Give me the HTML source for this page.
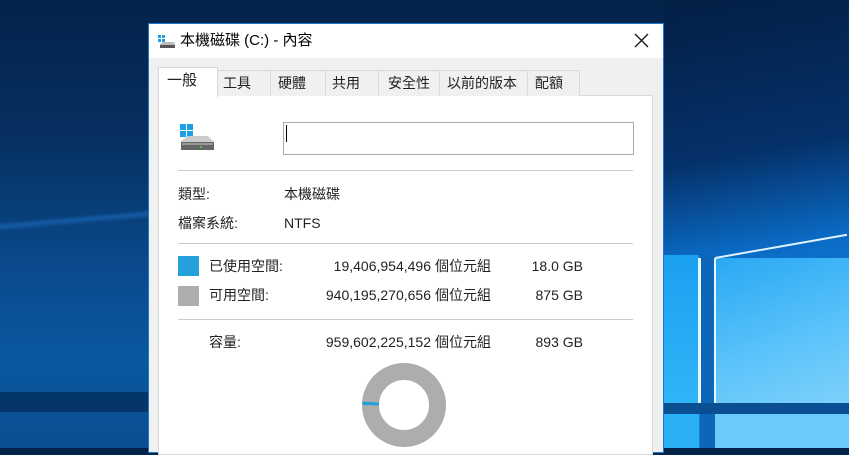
<!DOCTYPE html>
<html><head><meta charset="utf-8"><style>
*{margin:0;padding:0;box-sizing:border-box}
body{width:849px;height:448px;overflow:hidden;position:relative;font-family:"Liberation Sans","Noto Sans CJK TC",sans-serif;font-size:14px;color:#222;
background:linear-gradient(180deg,#04234a 0%,#062f60 30%,#0a4a8c 60%,#0a58a0 80%,#0a4f90 100%)}
.a{position:absolute}
.t{position:absolute;white-space:nowrap;line-height:18px}
</style></head><body>
<div class="a" style="left:0;top:205px;width:150px;height:30px;background:linear-gradient(175deg,transparent 40%,rgba(40,130,230,.4) 50%,transparent 62%)"></div>
<div class="a" style="left:0;top:392px;width:150px;height:20px;background:#032a55;opacity:.7"></div>
<div class="a" style="left:663px;top:0;width:186px;height:448px;background:linear-gradient(170deg,#031f44 0%,#05316a 35%,#0a6ac4 55%,#1280d8 70%)"></div>
<div class="a" style="left:700px;top:255px;width:15px;height:193px;background:#0e66b8"></div>
<div class="a" style="left:663px;top:403px;width:186px;height:11px;background:#0a4f92"></div>
<div class="a" style="left:663px;top:255px;width:36px;height:148px;background:linear-gradient(180deg,#1aa0f0,#30b4f8)"></div>
<div class="a" style="left:715px;top:258px;width:134px;height:145px;background:linear-gradient(160deg,#2aa8f4,#5cc4fa 60%,#7ed0fb)"></div>
<div class="a" style="left:663px;top:414px;width:36px;height:34px;background:#2ab0f6"></div>
<div class="a" style="left:715px;top:414px;width:134px;height:34px;background:#6ccafb"></div>
<div class="a" style="left:698px;top:258px;width:3px;height:145px;background:#e8f8ff"></div>
<div class="a" style="left:714px;top:258px;width:2px;height:145px;background:#e8f8ff"></div>
<div class="a" style="left:715px;top:257px;width:134px;height:2px;background:#dff4ff;transform:rotate(-10deg);transform-origin:left"></div>
<div class="a" style="left:148px;top:23px;width:516px;height:430px;background:#f0f0f0;border:1px solid #1979ca"></div>
<div class="a" style="left:149px;top:24px;width:514px;height:34px;background:#fff"></div>
<svg class="a" style="left:157px;top:34px" width="20" height="16" viewBox="0 0 20 16"><rect x="1" y="1" width="3" height="3" fill="#1ba1e2"/><rect x="5" y="1" width="3" height="3" fill="#1ba1e2"/><rect x="1" y="5" width="3" height="3" fill="#1ba1e2"/><rect x="5" y="5" width="3" height="3" fill="#1ba1e2"/><path d="M3 10 L6 8 L17 8 L18 11 L18 14 L3 14Z" fill="#bbb"/><rect x="3" y="11" width="15" height="3" fill="#555"/></svg>
<div class="t" style="left:180px;top:32px;font-size:15px;color:#000">本機磁碟 (C:) - 內容</div>
<svg class="a" style="left:634px;top:33px" width="15" height="15"><path d="M1 1L14 14M14 1L1 14" stroke="#111" stroke-width="1.3"/></svg>
<div class="a" style="left:158px;top:95px;width:495px;height:360px;background:#fff;border:1px solid #d9d9d9"></div>
<div class="a" style="left:217px;top:70px;width:363px;height:26px;background:#f0f0f0;border:1px solid #d9d9d9;border-bottom:none"></div>
<div class="a" style="left:270px;top:70px;width:1px;height:25px;background:#d9d9d9"></div>
<div class="a" style="left:325px;top:70px;width:1px;height:25px;background:#d9d9d9"></div>
<div class="a" style="left:378px;top:70px;width:1px;height:25px;background:#d9d9d9"></div>
<div class="a" style="left:439px;top:70px;width:1px;height:25px;background:#d9d9d9"></div>
<div class="a" style="left:527px;top:70px;width:1px;height:25px;background:#d9d9d9"></div>
<div class="a" style="left:158px;top:67px;width:60px;height:30px;background:#fff;border:1px solid #d9d9d9;border-bottom:none"></div>
<div class="t" style="left:167px;top:72px;font-size:15px">一般</div>
<div class="t" style="left:223px;top:74px">工具</div>
<div class="t" style="left:278px;top:74px">硬體</div>
<div class="t" style="left:332px;top:74px">共用</div>
<div class="t" style="left:388px;top:74px">安全性</div>
<div class="t" style="left:447px;top:74px">以前的版本</div>
<div class="t" style="left:535px;top:74px">配額</div>
<svg class="a" style="left:178px;top:120px" width="40" height="34" viewBox="0 0 40 34"><rect x="2" y="4" width="6" height="6" fill="#1ba1e2"/><rect x="9" y="4" width="6" height="6" fill="#1ba1e2"/><rect x="2" y="11" width="6" height="6" fill="#1ba1e2"/><rect x="9" y="11" width="6" height="6" fill="#1ba1e2"/><path d="M3 21 L10 16 L30 16 L36 22 L36 30 L3 30Z" fill="#ccc"/><path d="M3 22 L36 22 L36 30 L3 30Z" fill="#666"/><rect x="4" y="23" width="31" height="2" fill="#999"/><rect x="22" y="26" width="2" height="2" fill="#3c3"/></svg>
<div class="a" style="left:283px;top:122px;width:351px;height:33px;border:1px solid #aaa;background:#fff"></div>
<div class="a" style="left:286px;top:125px;width:1px;height:17px;background:#000"></div>
<div class="a" style="left:178px;top:170px;width:455px;height:1px;background:#ccc"></div>
<div class="t" style="left:178px;top:185px">類型:</div>
<div class="t" style="left:284px;top:185px">本機磁碟</div>
<div class="t" style="left:178px;top:214px">檔案系統:</div>
<div class="t" style="left:284px;top:214px">NTFS</div>
<div class="a" style="left:178px;top:243px;width:455px;height:1px;background:#ccc"></div>
<div class="a" style="left:178px;top:256px;width:21px;height:20px;background:#26a0da"></div>
<div class="a" style="left:178px;top:286px;width:21px;height:20px;background:#adadad"></div>
<div class="t" style="left:209px;top:257px">已使用空間:</div>
<div class="t" style="left:209px;top:286px">可用空間:</div>
<div class="t" style="left:209px;top:333px">容量:</div>
<div class="t" style="left:300px;width:131px;text-align:right;top:257px">19,406,954,496</div>
<div class="t" style="left:300px;width:131px;text-align:right;top:286px">940,195,270,656</div>
<div class="t" style="left:300px;width:131px;text-align:right;top:333px">959,602,225,152</div>
<div class="t" style="left:435px;top:257px">個位元組</div>
<div class="t" style="left:435px;top:286px">個位元組</div>
<div class="t" style="left:435px;top:333px">個位元組</div>
<div class="t" style="left:500px;width:83px;text-align:right;top:257px">18.0 GB</div>
<div class="t" style="left:500px;width:83px;text-align:right;top:286px">875 GB</div>
<div class="t" style="left:500px;width:83px;text-align:right;top:333px">893 GB</div>
<div class="a" style="left:178px;top:319px;width:455px;height:1px;background:#ccc"></div>
<svg class="a" style="left:360px;top:361px" width="88" height="88" viewBox="0 0 88 88"><circle cx="44" cy="44" r="33.5" fill="none" stroke="#adadad" stroke-width="17"/><path d="M2.5 40.5 L19 41.5 L19 44.5 L2.5 44Z" fill="#26a0da"/></svg>
</body></html>
